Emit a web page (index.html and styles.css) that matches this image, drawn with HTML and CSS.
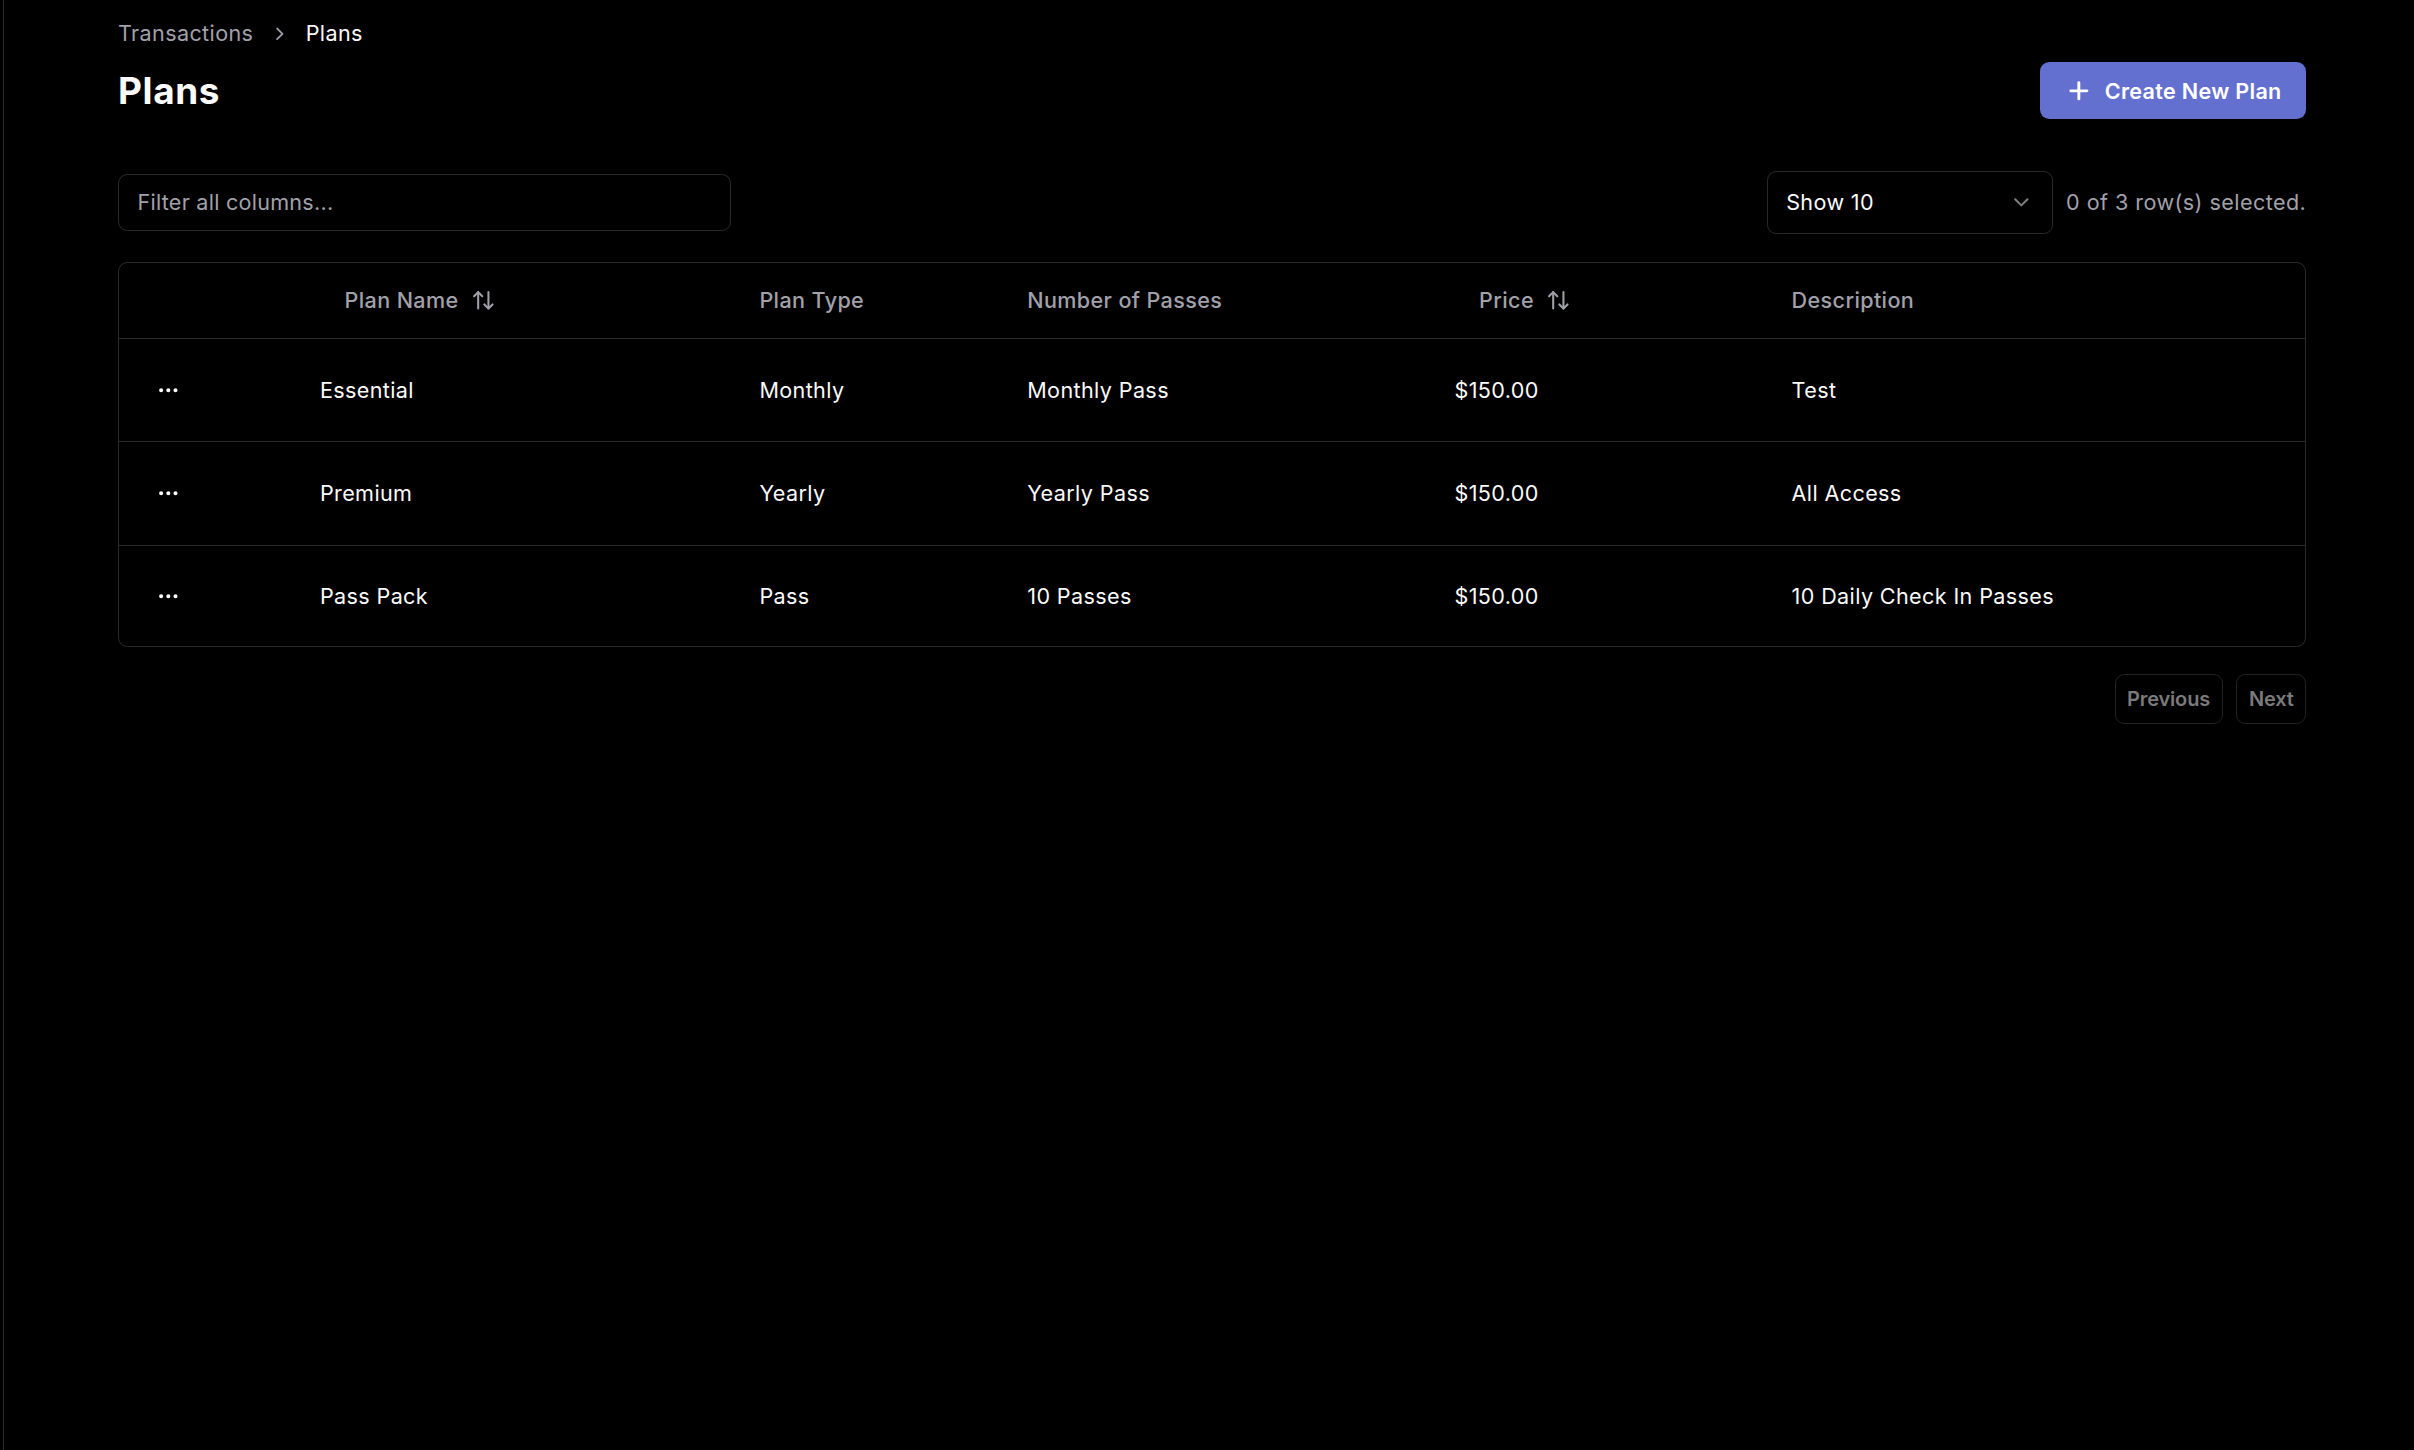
FILE: index.html
```html
<!DOCTYPE html>
<html lang="en">
<head>
<meta charset="utf-8">
<title>Plans</title>
<link rel="stylesheet" href="styles.css">
</head>
<body>
<div class="shell">
  <main class="page">
    <nav class="breadcrumb">
      <span class="crumb">Transactions</span>
      <svg class="crumb-sep" viewBox="0 0 24 24" fill="none" stroke="currentColor" stroke-width="2" stroke-linecap="round" stroke-linejoin="round"><path d="m9 18 6-6-6-6"/></svg>
      <span class="crumb crumb-current">Plans</span>
    </nav>

    <div class="page-header">
      <h1 class="title">Plans</h1>
      <button class="btn-primary" type="button">
        <svg class="btn-icon" viewBox="0 0 24 24" fill="none" stroke="currentColor" stroke-width="2.5" stroke-linecap="round" stroke-linejoin="round"><path d="M5 12h14"/><path d="M12 5v14"/></svg>
        <span>Create New Plan</span>
      </button>
    </div>

    <div class="toolbar">
      <input class="filter" type="text" placeholder="Filter all columns...">
      <div class="toolbar-right">
        <button class="select" type="button">
          <span>Show 10</span>
          <svg class="select-icon" viewBox="0 0 24 24" fill="none" stroke="currentColor" stroke-width="2" stroke-linecap="round" stroke-linejoin="round"><path d="m6 9 6 6 6-6"/></svg>
        </button>
        <span class="selection">0 of 3 row(s) selected.</span>
      </div>
    </div>

    <div class="table-wrap">
      <table class="table">
        <colgroup>
          <col class="c-actions">
          <col class="c-name">
          <col class="c-type">
          <col class="c-passes">
          <col class="c-price">
          <col class="c-desc">
        </colgroup>
        <thead>
          <tr>
            <th></th>
            <th>
              <button class="sort-btn" type="button">Plan Name
                <svg class="sort-icon" viewBox="0 0 24 24" fill="none" stroke="currentColor" stroke-width="2" stroke-linecap="round" stroke-linejoin="round"><path d="m21 16-4 4-4-4"/><path d="M17 20V4"/><path d="m3 8 4-4 4 4"/><path d="M7 4v16"/></svg>
              </button>
            </th>
            <th>Plan Type</th>
            <th>Number of Passes</th>
            <th>
              <button class="sort-btn" type="button">Price
                <svg class="sort-icon" viewBox="0 0 24 24" fill="none" stroke="currentColor" stroke-width="2" stroke-linecap="round" stroke-linejoin="round"><path d="m21 16-4 4-4-4"/><path d="M17 20V4"/><path d="m3 8 4-4 4 4"/><path d="M7 4v16"/></svg>
              </button>
            </th>
            <th>Description</th>
          </tr>
        </thead>
        <tbody>
          <tr>
            <td><button class="row-action" type="button"><svg viewBox="0 0 24 24" fill="none" stroke="currentColor" stroke-width="2" stroke-linecap="round" stroke-linejoin="round"><circle cx="12" cy="12" r="1"/><circle cx="19" cy="12" r="1"/><circle cx="5" cy="12" r="1"/></svg></button></td>
            <td>Essential</td>
            <td>Monthly</td>
            <td>Monthly Pass</td>
            <td>$150.00</td>
            <td>Test</td>
          </tr>
          <tr>
            <td><button class="row-action" type="button"><svg viewBox="0 0 24 24" fill="none" stroke="currentColor" stroke-width="2" stroke-linecap="round" stroke-linejoin="round"><circle cx="12" cy="12" r="1"/><circle cx="19" cy="12" r="1"/><circle cx="5" cy="12" r="1"/></svg></button></td>
            <td>Premium</td>
            <td>Yearly</td>
            <td>Yearly Pass</td>
            <td>$150.00</td>
            <td>All Access</td>
          </tr>
          <tr>
            <td><button class="row-action" type="button"><svg viewBox="0 0 24 24" fill="none" stroke="currentColor" stroke-width="2" stroke-linecap="round" stroke-linejoin="round"><circle cx="12" cy="12" r="1"/><circle cx="19" cy="12" r="1"/><circle cx="5" cy="12" r="1"/></svg></button></td>
            <td>Pass Pack</td>
            <td>Pass</td>
            <td>10 Passes</td>
            <td>$150.00</td>
            <td>10 Daily Check In Passes</td>
          </tr>
        </tbody>
      </table>
    </div>

    <div class="pagination">
      <button class="page-btn" type="button" disabled>Previous</button>
      <button class="page-btn" type="button" disabled>Next</button>
    </div>
  </main>
</div>
</body>
</html>
```

FILE: styles.css
```css
html {
  zoom: 1.5395;
  height: 100%;
  background: #000;
}

body {
  margin: 0;
  height: 100%;
  overflow: hidden;
  background: #000;
  color: #fafafa;
  font-family: Inter, "Noto Sans", "Liberation Sans", sans-serif;
  font-size: 14px;
  line-height: 20px;
  letter-spacing: 0.25px;
}

.shell {
  height: 100%;
  margin-left: 2px;
  border-left: 1px solid #2a2a2a;
  box-sizing: border-box;
}

.page {
  padding: 12px 70px 0 74px;
}

/* Breadcrumb */
.breadcrumb {
  display: flex;
  align-items: center;
  gap: 10px;
  height: 20px;
  color: #a1a1aa;
}

.crumb-current {
  color: #fafafa;
}

.crumb-sep {
  width: 14px;
  height: 14px;
}

/* Header */
.page-header {
  display: flex;
  align-items: center;
  justify-content: space-between;
  margin-top: 8.5px;
}

.title {
  margin: 0;
  font-size: 24px;
  line-height: 32px;
  font-weight: 700;
  letter-spacing: 0.4px;
}

.btn-primary {
  display: inline-flex;
  align-items: center;
  gap: 8px;
  height: 37px;
  padding: 0 16px;
  border: 0;
  border-radius: 6px;
  background: #6470d0;
  color: #fff;
  font-family: inherit;
  font-size: 14px;
  font-weight: 600;
  letter-spacing: 0.2px;
}

.btn-icon {
  width: 18px;
  height: 18px;
}

/* Toolbar */
.toolbar {
  display: flex;
  align-items: center;
  justify-content: space-between;
  margin-top: 33.5px;
  height: 41px;
}

.filter {
  width: 398px;
  height: 37px;
  box-sizing: border-box;
  padding: 0 12px;
  border: 1px solid #2a2a2d;
  border-radius: 6px;
  background: transparent;
  color: #fafafa;
  font-family: inherit;
  font-size: 14px;
  letter-spacing: 0.17px;
  outline: none;
}

.filter::placeholder {
  color: #a1a1aa;
}

.toolbar-right {
  display: flex;
  align-items: center;
  gap: 8.5px;
}

.select {
  display: flex;
  align-items: center;
  justify-content: space-between;
  width: 186px;
  height: 41px;
  box-sizing: border-box;
  padding: 0 12px;
  border: 1px solid #2a2a2d;
  border-radius: 6px;
  background: transparent;
  color: #fafafa;
  font-family: inherit;
  font-size: 14px;
  letter-spacing: 0.25px;
}

.select-icon {
  width: 16px;
  height: 16px;
  opacity: 0.5;
}

.selection {
  color: #a1a1aa;
  letter-spacing: 0.29px;
}

/* Table */
.table-wrap {
  margin-top: 18px;
  border: 1px solid #2a2a2d;
  border-radius: 6px;
  overflow: hidden;
}

.table {
  width: 100%;
  border-collapse: collapse;
  table-layout: fixed;
}

.c-actions { width: 114.5px; }
.c-name { width: 285.5px; }
.c-type { width: 174px; }
.c-passes { width: 277.5px; }
.c-price { width: 219px; }

.table th {
  height: 48.8px;
  padding: 0 16px;
  text-align: left;
  font-weight: 500;
  color: #a1a1aa;
  border-bottom: 1px solid #2a2a2d;
}

.table td {
  height: 66.5px;
  padding: 0 16px;
  color: #fafafa;
}

.table tbody tr:last-child td {
  height: 65.5px;
}

.table tbody tr + tr td {
  border-top: 1px solid #2a2a2d;
}

.sort-btn {
  display: inline-flex;
  align-items: center;
  gap: 8px;
  height: 36px;
  padding: 0 16px;
  border: 0;
  background: transparent;
  color: #a1a1aa;
  font-family: inherit;
  font-size: 14px;
  font-weight: 500;
  letter-spacing: 0.25px;
}

.sort-icon {
  width: 16px;
  height: 16px;
}

.row-action {
  display: flex;
  align-items: center;
  justify-content: center;
  width: 32px;
  height: 32px;
  padding: 0;
  border: 0;
  background: transparent;
  color: #fafafa;
}

.row-action svg {
  width: 16px;
  height: 16px;
}

/* Pagination */
.pagination {
  display: flex;
  justify-content: flex-end;
  gap: 9px;
  margin-top: 17px;
}

.page-btn {
  height: 32.5px;
  padding: 0 7.5px;
  border: 1px solid #222224;
  border-radius: 6px;
  background: transparent;
  color: #7a7a7c;
  font-family: inherit;
  font-size: 13px;
  font-weight: 600;
  letter-spacing: -0.1px;
}
```
